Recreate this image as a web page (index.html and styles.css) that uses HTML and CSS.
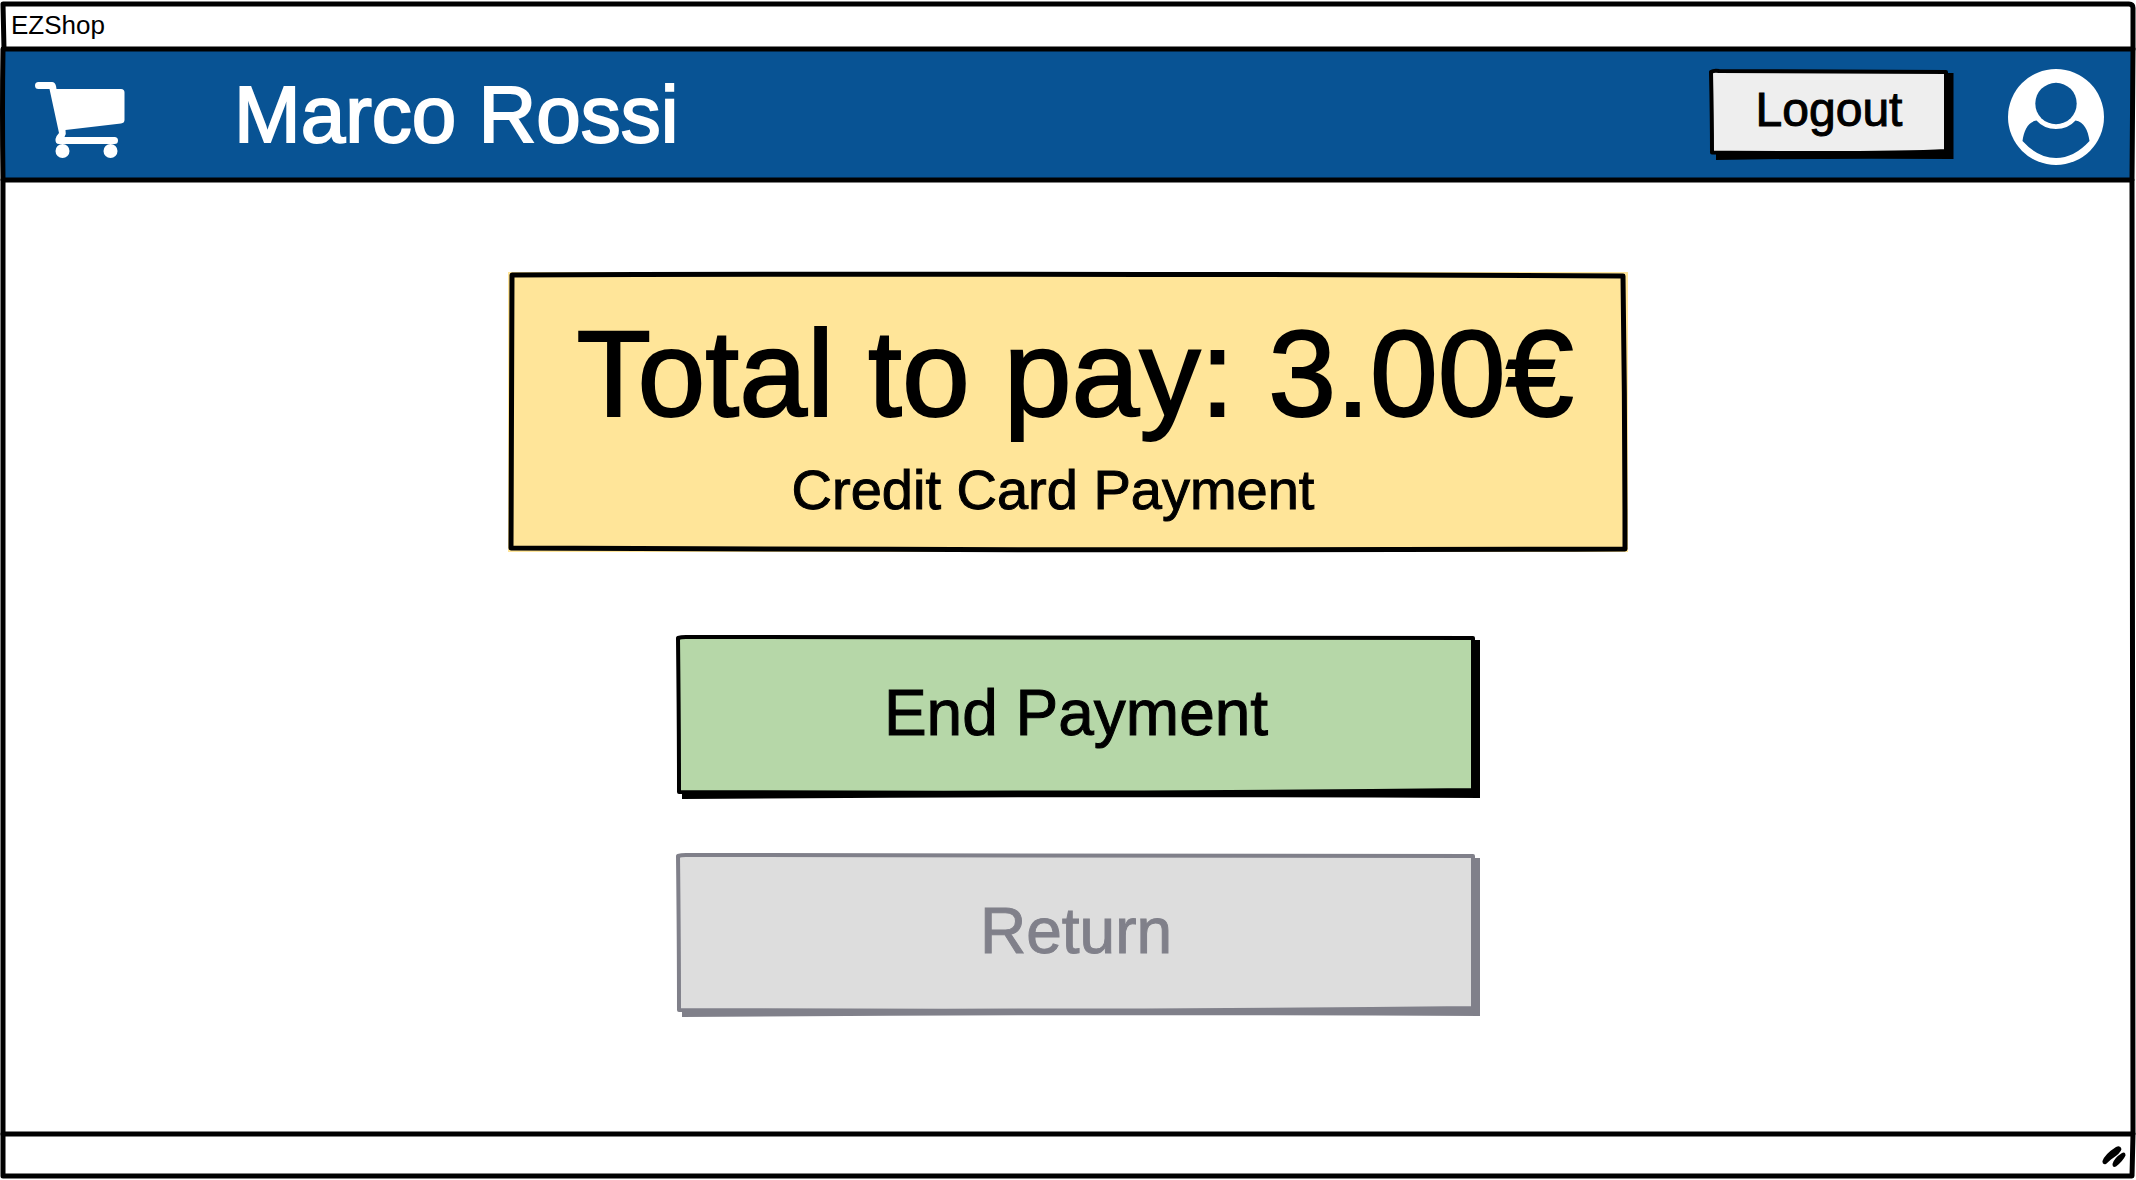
FILE: index.html
```html
<!DOCTYPE html>
<html lang="en">
<head>
<meta charset="utf-8">
<title>EZShop</title>
<link rel="stylesheet" href="styles.css">
</head>
<body>
<div class="window">
  <div class="titlebar">
    <svg class="outline" viewBox="0 0 2130 45" preserveAspectRatio="none" aria-hidden="true">
      <path d="M0 0Q1000 -2 2126 0Q2130 0 2130 4V45M0 0L1 45"/>
    </svg>
    <span class="titlebar-text">EZShop</span>
  </div>
  <header class="header">
    <svg class="outline" viewBox="0 0 2130 131" preserveAspectRatio="none" aria-hidden="true">
      <path d="M0 0Q700 -1 2130 0L2129 131Q1100 133 0 131Q-1 60 0 0Z"/>
    </svg>
    <svg class="cart" viewBox="0 0 90 76" aria-hidden="true">
      <path d="M3.500 0H17Q20 0 21 4L21.500 7H86Q89.500 7 89.500 10.500V38Q89.500 41 86 41.500L30.500 48Q31.500 52 29.500 55H79.500A3.500 3.500 0 0 1 79.500 62H24Q20 62 20.500 57Q21 54 24 51L14.500 7H3.500A3.500 3.500 0 0 1 3.500 0Z"/>
      <circle cx="27.500" cy="69" r="7"/>
      <circle cx="75.500" cy="69" r="7"/>
    </svg>
    <h1 class="user-name">Marco Rossi</h1>
    <button class="sketch-button logout" type="button">
      <svg class="outline" viewBox="0 0 240 86" preserveAspectRatio="none" aria-hidden="true">
        <path class="shade" d="M7 4H244.500V90Q120 89 7 91Z"/>
        <path d="M2 3Q5 1 10 2Q110 2 237 3V82Q180 85 3 83.500Q3 50 2 3Z"/>
      </svg>
      <span class="label">Logout</span>
    </button>
    <svg class="avatar" viewBox="0 0 96 96" role="img" aria-label="Account">
      <circle class="avatar-disc" cx="48" cy="48" r="48"/>
      <circle class="avatar-part" cx="48" cy="34.500" r="20.700"/>
      <path class="avatar-part" d="M28.500 51.500Q36 60 48 60T67.500 51.500C76 53 80 61 81.500 72Q66 89 48 89T14.500 72C16 61 20 53 28.500 51.500Z"/>
    </svg>
  </header>
  <main class="content">
    <svg class="outline" viewBox="0 0 2130 954" preserveAspectRatio="none" aria-hidden="true">
      <path d="M0 0Q-1 500 0 954M2129 0L2130 954"/>
    </svg>
    <section class="total">
      <svg class="outline" viewBox="0 0 1120 280" preserveAspectRatio="none" aria-hidden="true">
        <path d="M4 3Q560 1 1115 4Q1117 140 1117 277Q560 279 3 276Q3 120 4 3Z"/>
      </svg>
      <p class="amount">Total to pay: 3.00€</p>
      <p class="method">Credit Card Payment</p>
    </section>
    <div class="actions">
      <button class="sketch-button confirm" type="button">
        <svg class="outline" viewBox="0 0 800 158" preserveAspectRatio="none" aria-hidden="true">
          <path class="shade" d="M6 4H804V162Q400 160 6 163Z"/>
          <path d="M2 2Q5 1 10 1Q400 2 797 2V154Q400 158 3 156Q3 90 2 2Z"/>
        </svg>
        <span class="label">End Payment</span>
      </button>
      <button class="sketch-button return" type="button" disabled>
        <svg class="outline" viewBox="0 0 800 158" preserveAspectRatio="none" aria-hidden="true">
          <path class="shade" d="M6 4H804V162Q400 160 6 163Z"/>
          <path d="M2 2Q5 1 10 1Q400 2 797 2V154Q400 158 3 156Q3 90 2 2Z"/>
        </svg>
        <span class="label">Return</span>
      </button>
    </div>
  </main>
  <footer class="statusbar">
    <svg class="outline" viewBox="0 0 2130 42" preserveAspectRatio="none" aria-hidden="true">
      <path d="M0 0Q1000 -1 2130 0L2129 42Q1200 43 0 42Z"/>
    </svg>
    <svg class="grip" viewBox="0 0 24 22" aria-hidden="true">
      <path d="M0.500 15Q3 8 14 1Q18.500 -1 19.500 3Q19 7 9 13.500L4 18Q0 19 0.500 15ZM10.500 18Q12 12 20 7Q23.500 5.500 23.500 9.500Q21 15 14 20.500Q10.500 22 10.500 18Z"/>
    </svg>
  </footer>
</div>
</body>
</html>
```
FILE: styles.css
```css
* {
  box-sizing: border-box;
}

body {
  margin: 0;
  background: #fff;
  color: #000;
  font-family: "Liberation Sans", Arial, sans-serif;
}

h1,
p {
  margin: 0;
  font-weight: 400;
}

.window {
  display: flex;
  flex-direction: column;
  min-height: 100vh;
  padding: 4px 3px;
}

.outline {
  position: absolute;
  inset: 0;
  width: 100%;
  height: 100%;
  overflow: visible;
  fill: none;
  stroke: #000;
  stroke-width: 5px;
  stroke-linejoin: round;
  stroke-linecap: round;
  pointer-events: none;
}

.outline path {
  vector-effect: non-scaling-stroke;
}

.outline .shade {
  stroke: none;
}

.titlebar {
  position: relative;
  display: flex;
  align-items: center;
  height: 45px;
  padding: 0 8px 4px;
  font-size: 26px;
  line-height: 28px;
}

.titlebar-text {
  position: relative;
}

.header {
  position: relative;
  display: flex;
  align-items: center;
  height: 131px;
  padding: 4px 29px 0 32px;
  background: #085394;
  color: #fff;
}

.cart {
  position: relative;
  width: 90px;
  height: 76px;
  margin-top: 6px;
  fill: #fff;
}

.user-name {
  position: relative;
  margin: 0 0 4px 109px;
  font-size: 80px;
  line-height: 92px;
  -webkit-text-stroke: 2px currentColor;
}

.avatar {
  position: relative;
  width: 96px;
  height: 96px;
  margin-left: 59px;
}

.avatar-disc {
  fill: #fff;
}

.avatar-part {
  fill: #085394;
}

.sketch-button {
  position: relative;
  padding: 0 0 4px;
  border: 0;
  background: none;
  color: #000;
  font-family: inherit;
}

.label {
  position: relative;
  -webkit-text-stroke: 1px currentColor;
}

.logout {
  width: 240px;
  height: 86px;
  margin: 0 0 10px auto;
  font-size: 48px;
  line-height: 56px;
}

.logout .outline {
  fill: #eee;
}

.content {
  position: relative;
  display: flex;
  flex: 1;
  flex-direction: column;
  align-items: center;
  padding: 92px 24px;
}

.total {
  position: relative;
  width: 100%;
  max-width: 1120px;
  padding: 34px 24px 30px;
  background: #ffe599;
  text-align: center;
}

.amount {
  position: relative;
  padding-left: 14px;
  font-size: 122px;
  line-height: 136px;
  -webkit-text-stroke: 2px currentColor;
}

.method {
  position: relative;
  padding: 16px 30px 0 0;
  font-size: 56px;
  line-height: 64px;
  -webkit-text-stroke: 1px currentColor;
}

.actions {
  display: flex;
  flex-direction: column;
  gap: 60px;
  width: 100%;
  max-width: 816px;
  margin-top: 84px;
  padding-left: 16px;
}

.confirm,
.return {
  height: 158px;
  font-size: 64px;
  line-height: 72px;
}

.confirm .outline {
  fill: #b6d7a8;
}

.return {
  color: #80808a;
}

.return .outline {
  fill: #ddd;
  stroke: #80808a;
}

.sketch-button .outline {
  stroke-width: 4px;
}

.sketch-button .shade {
  fill: #000;
}

.return .shade {
  fill: #80808a;
}

.statusbar {
  position: relative;
  display: flex;
  align-items: center;
  justify-content: flex-end;
  height: 42px;
  padding: 4px 7px 0;
}

.grip {
  position: relative;
  width: 24px;
  height: 22px;
}
```
